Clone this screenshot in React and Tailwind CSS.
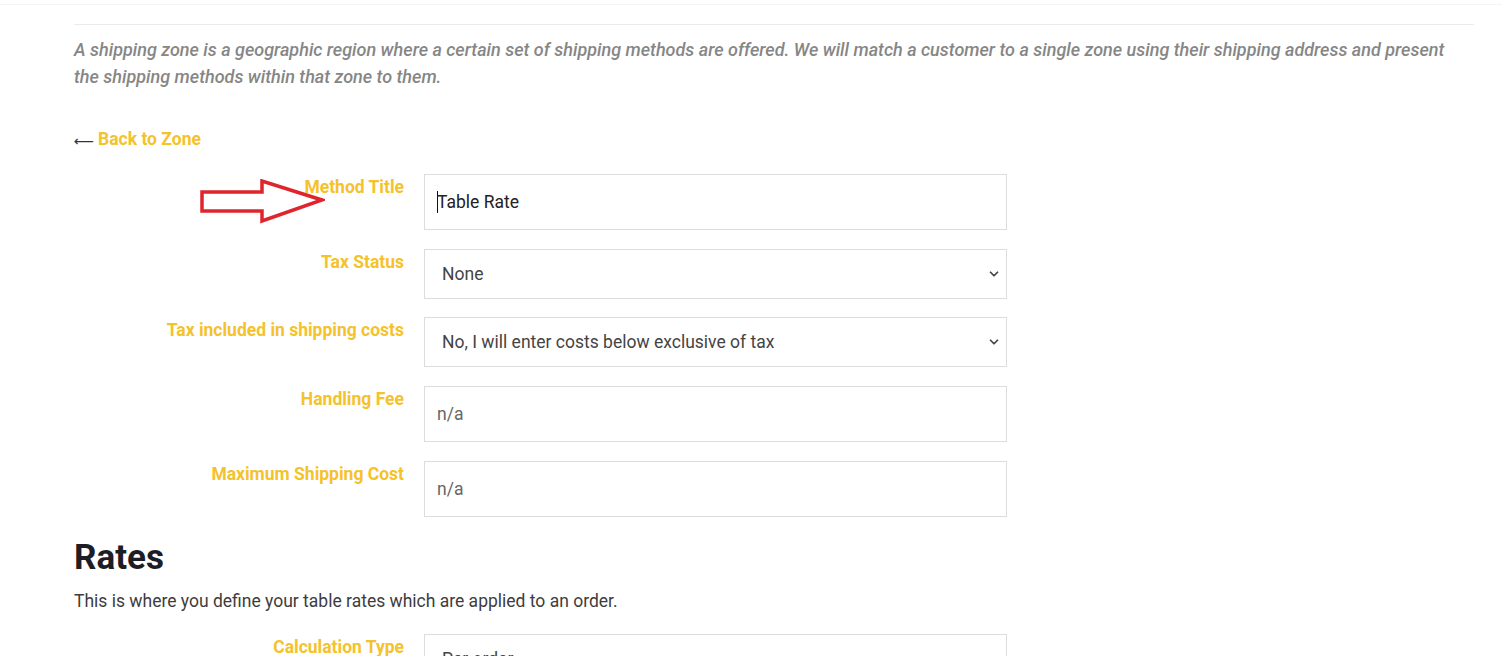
import React from "react";

const Label = ({ children }) => (
  <div className="w-[330px] shrink-0 pt-px text-right text-[17.5px] leading-6 font-bold text-[#f4c22b]">
    {children}
  </div>
);

const TextField = ({ value, dim, caret }) => (
  <div className={`w-[583px] h-[56px] border border-[#dcdcdc] bg-white flex items-center pl-[12px] text-[17.5px] ${dim ? "text-[#666]" : "text-[#222]"}`}>
    {caret && <span className="w-px h-[22px] bg-[#111] mr-[-1px]" />}
    <span>{value}</span>
  </div>
);

const SelectField = ({ value }) => (
  <div className="w-[583px] h-[50px] border border-[#dcdcdc] bg-white flex items-center justify-between pl-[17px] pr-[5px] text-[17.5px] text-[#444]">
    <span>{value}</span>
    <svg width="14" height="14" viewBox="0 0 24 24" fill="none" stroke="#444" strokeWidth="3" strokeLinecap="round" strokeLinejoin="round">
      <path d="M6 9l6 6 6-6" />
    </svg>
  </div>
);

const Row = ({ label, children, className = "" }) => (
  <div className={`flex items-start gap-[20px] ${className}`}>
    <Label>{label}</Label>
    {children}
  </div>
);

export default function App() {
  return (
    <div className="w-[1502px] h-[656px] overflow-hidden bg-white" style={{ fontFamily: "Roboto, 'Liberation Sans', sans-serif" }}>
      <div className="h-[5px] border-b border-[#f4f4f4]" />
      <div className="ml-[74px] w-[1400px] mt-[19px] border-t border-[#ebebeb]">
        <p className="mt-[11px] pr-[10px] text-[18px] leading-[27px] italic font-medium text-[#868686]">
          A shipping zone is a geographic region where a certain set of shipping methods are offered. We will match a customer to a single zone using their shipping address and present the shipping methods within that zone to them.
        </p>

        <div className="mt-[36px] h-[27px] flex items-center">
          <span className="text-[14px] text-[#333] leading-none pt-[3px]" style={{ fontFamily: "'DejaVu Sans', sans-serif" }}>&#x27F5;</span>
          <span className="ml-[4px] text-[17.5px] font-bold text-[#f4c22b]">Back to Zone</span>
        </div>

        <div className="relative mt-[21px] flex flex-col gap-[19px]">
          <svg className="absolute left-[126px] top-[5px]" width="125" height="46" viewBox="0 0 125 46" fill="none">
            <path d="M2 13 H62 V2 L122 21 L62 42 V32 H2 Z" stroke="#e0242c" strokeWidth="3.5" strokeLinejoin="miter" />
          </svg>
          <Row label="Method Title">
            <TextField value="Table Rate" caret />
          </Row>
          <Row label="Tax Status">
            <SelectField value="None" />
          </Row>
          <Row label="Tax included in shipping costs" className="-mt-px">
            <SelectField value="No, I will enter costs below exclusive of tax" />
          </Row>
          <Row label="Handling Fee">
            <TextField value="n/a" dim />
          </Row>
          <Row label="Maximum Shipping Cost">
            <TextField value="n/a" dim />
          </Row>
        </div>

        <h2 className="mt-[21px] text-[35px] leading-[40px] font-bold text-[#1d1d26]">Rates</h2>
        <p className="mt-[11px] text-[17.5px] leading-6 text-[#3d3d3d]">
          This is where you define your table rates which are applied to an order.
        </p>

        <Row label="Calculation Type" className="mt-[21px]">
          <SelectField value="Per order" />
        </Row>
      </div>
    </div>
  );
}
